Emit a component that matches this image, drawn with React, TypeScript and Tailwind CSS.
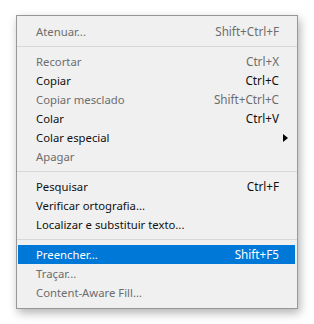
import React from 'react';

type Item =
  | { kind: 'sep' }
  | { kind: 'item'; label: string; shortcut?: string; disabled?: boolean; submenu?: boolean; active?: boolean };

const items: Item[] = [
  { kind: 'item', label: 'Atenuar...', shortcut: 'Shift+Ctrl+F', disabled: true },
  { kind: 'sep' },
  { kind: 'item', label: 'Recortar', shortcut: 'Ctrl+X', disabled: true },
  { kind: 'item', label: 'Copiar', shortcut: 'Ctrl+C' },
  { kind: 'item', label: 'Copiar mesclado', shortcut: 'Shift+Ctrl+C', disabled: true },
  { kind: 'item', label: 'Colar', shortcut: 'Ctrl+V' },
  { kind: 'item', label: 'Colar especial', submenu: true },
  { kind: 'item', label: 'Apagar', disabled: true },
  { kind: 'sep' },
  { kind: 'item', label: 'Pesquisar', shortcut: 'Ctrl+F' },
  { kind: 'item', label: 'Verificar ortografia...' },
  { kind: 'item', label: 'Localizar e substituir texto...' },
  { kind: 'sep' },
  { kind: 'item', label: 'Preencher...', shortcut: 'Shift+F5', active: true },
  { kind: 'item', label: 'Traçar...', disabled: true },
  { kind: 'item', label: 'Content-Aware Fill...', disabled: true },
];

export default function App() {
  return (
    <div className="w-[314px] h-[324px] bg-white pt-[15px] pl-[16px]">
      <div
        className="w-[282px] h-[294px] bg-[#f0f0f0] border border-[#979797] pt-[6px] pl-[1px] pr-[2px] shadow-[2px_4px_9px_rgba(0,0,0,0.3)]"
        style={{ fontFamily: '"Segoe UI", "Noto Sans", sans-serif' }}
      >
        {items.map((it, i) =>
          it.kind === 'sep' ? (
            <div key={i} className="h-[11px] flex items-center -ml-[1px] -mr-[2px]">
              <div className="h-px w-full bg-[#d7d7d7]" />
            </div>
          ) : (
            <div
              key={i}
              className={
                'h-[19px] flex items-center pl-[18px] pr-[16px] leading-none ' +
                (it.active ? 'bg-[#0078d7] text-white' : it.disabled ? 'text-[#6d6d6d]' : 'text-[#111]')
              }
            >
              <span className="flex-1 text-[11.3px]">{it.label}</span>
              {it.shortcut && <span className="text-[11.7px]">{it.shortcut}</span>}
              {it.submenu && (
                <svg width="5" height="8" viewBox="0 0 5 8" className="-mr-[9px]">
                  <path d="M0 0 L5 4 L0 8 Z" fill="#000" />
                </svg>
              )}
            </div>
          )
        )}
      </div>
    </div>
  );
}
